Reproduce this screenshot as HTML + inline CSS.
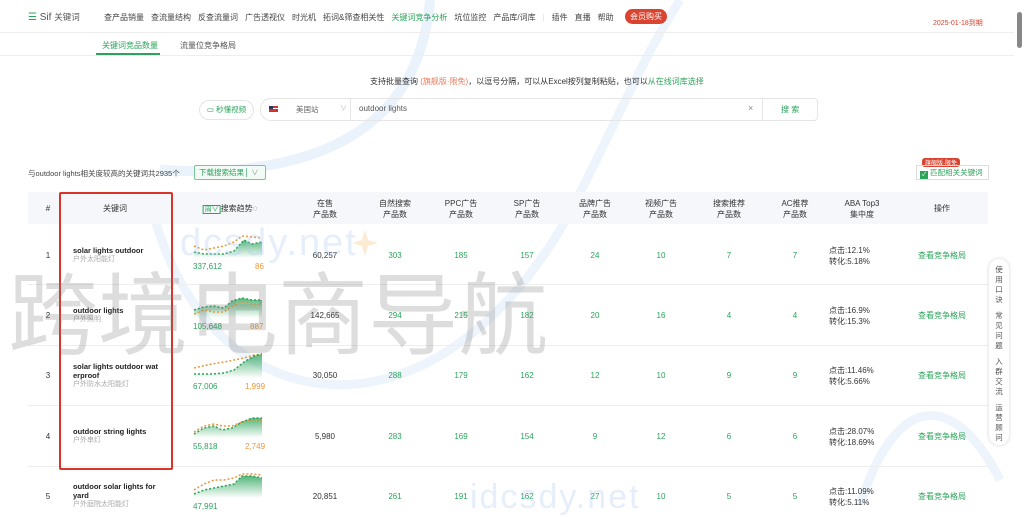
<!DOCTYPE html>
<html><head><meta charset="utf-8"><style>
*{box-sizing:border-box;margin:0;padding:0}
body{width:1024px;height:505px;overflow:hidden;background:#fff;font-family:"Liberation Sans","Noto Sans CJK SC",sans-serif;color:#333;position:relative;font-size:8px}
.abs{position:absolute;white-space:nowrap}
.top{position:absolute;left:0;top:0;width:1014px;height:33px;border-bottom:1px solid #eee}
.nav span{margin-right:7px}
.g{color:#2aa45a}
.o{color:#e8973a}
.th{position:absolute;top:192px;left:28px;width:960px;height:32px;background:#f5f7fa}
.c{position:absolute;text-align:center;transform:translateX(-50%);white-space:nowrap;line-height:11px}
.line{position:absolute;left:28px;width:960px;height:1px;background:#eee}
.kw{position:absolute;left:73px;font-weight:bold;color:#222;font-size:7.5px;line-height:9px;width:90px}
.kw i{display:block;font-style:normal;font-weight:normal;color:#aaa;font-size:7px}
.lk{color:#2aa45a}
.sb div{height:10.5px}
</style></head><body>
<svg class="abs" style="left:0;top:0" width="1024" height="505">
<path d="M430 0 C 420 120 330 180 160 170" fill="none" stroke="#eaf2fc" stroke-width="10"/>
<path d="M150 200 C 200 420 420 460 560 230 C 600 160 640 60 680 0" fill="none" stroke="#eef4fc" stroke-width="9"/>
<path d="M1000 480 C 960 400 900 380 860 505" fill="none" stroke="#eef4fc" stroke-width="9"/>
<path d="M365 230 l3 10 10 3 -10 3 -3 10 -3 -10 -10 -3 10 -3z" fill="#fcebd2"/>
</svg>
<div class="top">
<div class="abs" style="left:28px;top:11px;font-size:10px;color:#555"><span class="g">☰</span> Sif <span style="font-size:8.5px">关键词</span></div>
<div class="abs nav" style="left:104px;top:12px;font-size:8px;color:#444">
<span>查产品销量</span><span>查流量结构</span><span>反查流量词</span><span>广告透视仪</span><span>时光机</span><span>拓词&amp;筛查相关性</span><span class="g">关键词竞争分析</span><span>坑位监控</span><span>产品库/词库</span><span style="color:#ddd">|</span><span>插件</span><span>直播</span><span>帮助</span></div>
<div class="abs" style="left:625px;top:9px;background:#d9432f;color:#fff;border-radius:8px;padding:2px 5px;font-size:8px">会员购买</div>
<div class="abs" style="left:933px;top:18px;color:#d9432f;font-size:7px">2025-01-18到期</div>
</div>
<div class="abs" style="left:0;top:55px;width:1014px;height:1px;background:#eee"></div>
<div class="abs g" style="left:102px;top:40px;font-size:8px">关键词竞品数量</div>
<div class="abs" style="left:96px;top:53px;width:64px;height:2px;background:#2aa45a"></div>
<div class="abs" style="left:180px;top:40px;font-size:8px;color:#555">流量位竞争格局</div>
<div class="abs" style="left:370px;top:76px;font-size:8px;color:#333">支持批量查询 <span style="color:#e87a5a">(旗舰版·限免)</span>，以逗号分隔，可以从Excel按列复制粘贴，也可以<span class="g">从在线词库选择</span></div>
<div class="abs g" style="left:199px;top:100px;width:55px;height:20px;border:1px solid #e5e5e5;border-radius:10px;font-size:7.5px;line-height:18px;text-align:center">▭ 秒懂视频</div>
<div class="abs" style="left:260px;top:98px;width:558px;height:23px;border:1px solid #e5e5e5;border-radius:11px 4px 4px 11px"></div>
<div class="abs" style="left:269px;top:106px;width:9px;height:6px;background:linear-gradient(#c33 0 33%,#fff 33% 50%,#c33 50%);"><div style="width:4px;height:3px;background:#335"></div></div>
<div class="abs" style="left:296px;top:104px;color:#666;font-size:7.5px">美国站</div>
<div class="abs" style="left:340px;top:103px;color:#bbb;font-size:7px">∨</div>
<div class="abs" style="left:350px;top:98px;width:1px;height:23px;background:#e5e5e5"></div>
<div class="abs" style="left:359px;top:104px;color:#555;font-size:8px">outdoor lights</div>
<div class="abs" style="left:748px;top:103px;color:#888;font-size:9px">×</div>
<div class="abs" style="left:762px;top:98px;width:1px;height:23px;background:#e5e5e5"></div>
<div class="abs g" style="left:781px;top:104px;font-size:8px">搜 索</div>
<div class="abs" style="left:28px;top:168px;font-size:7.5px;color:#444">与outdoor lights相关度较高的关键词共2935个</div>
<div class="abs g" style="left:194px;top:165px;width:72px;height:15px;border:1px solid #7cc49a;border-radius:2px;font-size:7.5px;line-height:13px;padding-left:4px;background:#f3fbf6">下载搜索结果 <span style="border-left:1px solid #7cc49a;padding-left:4px;color:#999">∨</span></div>
<div class="abs" style="left:922px;top:158px;background:#d9432f;color:#fff;font-size:6px;padding:0 3px;border-radius:3px">旗舰版·限免</div>
<div class="abs g" style="left:916px;top:165px;width:73px;height:15px;border:1px solid #ddd;font-size:7.5px;line-height:13px;padding-left:3px"><span style="display:inline-block;width:8px;height:8px;background:#2aa45a;color:#fff;font-size:6px;line-height:8px;text-align:center;vertical-align:-1px">✓</span> 匹配相关关键词</div>
<div class="th"></div>
<div class="c" style="left:48px;top:203px">#</div>
<div class="c" style="left:115px;top:203px">关键词</div>
<div class="c" style="left:230px;top:203px"><span class="g" style="border:1px solid #2aa45a;padding:0 1px;font-size:7px">周∨</span>搜索趋势◌</div>
<div class="c" style="left:325px;top:198px">在售<br>产品数</div>
<div class="c" style="left:395px;top:198px">自然搜索<br>产品数</div>
<div class="c" style="left:461px;top:198px">PPC广告<br>产品数</div>
<div class="c" style="left:527px;top:198px">SP广告<br>产品数</div>
<div class="c" style="left:595px;top:198px">品牌广告<br>产品数</div>
<div class="c" style="left:661px;top:198px">视频广告<br>产品数</div>
<div class="c" style="left:729px;top:198px">搜索推荐<br>产品数</div>
<div class="c" style="left:795px;top:198px">AC推荐<br>产品数</div>
<div class="c" style="left:862px;top:198px">ABA Top3<br>集中度</div>
<div class="c" style="left:942px;top:203px">操作</div>
<div class="line" style="top:284px"></div><div class="line" style="top:345px"></div><div class="line" style="top:405px"></div><div class="line" style="top:466px"></div>

<div class="c" style="left:48px;top:250px">1</div><div class="kw" style="top:246px">solar lights outdoor<i>户外太阳能灯</i></div>
<div class="c" style="left:48px;top:310px">2</div><div class="kw" style="top:306px">outdoor lights<i>户外照明</i></div>
<div class="c" style="left:48px;top:370px">3</div><div class="kw" style="top:362px">solar lights outdoor wat erproof<i>户外防水太阳能灯</i></div>
<div class="c" style="left:48px;top:431px">4</div><div class="kw" style="top:427px">outdoor string lights<i>户外串灯</i></div>
<div class="c" style="left:48px;top:491px">5</div><div class="kw" style="top:482px">outdoor solar lights for yard<i>户外庭院太阳能灯</i></div>

<svg class="abs" style="left:192px;top:228px" width="74" height="280">
<defs><linearGradient id="gg" x1="0" y1="0" x2="0" y2="1"><stop offset="0" stop-color="#2aa45a" stop-opacity=".8"/><stop offset="1" stop-color="#2aa45a" stop-opacity="0"/></linearGradient></defs>
<g>
<path d="M2 24 L12 26 L22 26 L32 26 L42 23 L52 12 L60 16 L70 14 L70 30 L2 30Z" fill="url(#gg)"/>
<path d="M2 18 L12 22 L22 20 L32 18 L42 14 L50 8 L60 9 L70 10" fill="none" stroke="#e8973a" stroke-width="1.5" stroke-dasharray="2 2"/>
<path d="M2 24 L12 26 L22 26 L32 26 L42 23 L52 12 L60 16 L70 14" fill="none" stroke="#2aa45a" stroke-width="1.5" stroke-dasharray="2 2"/>
</g>
<g transform="translate(0,60)">
<path d="M2 22 L12 19 L22 18 L32 20 L40 13 L50 10 L60 12 L70 12 L70 30 L2 30Z" fill="url(#gg)"/>
<path d="M2 26 L12 22 L22 24 L32 24 L40 18 L50 14 L60 16 L70 16" fill="none" stroke="#e8973a" stroke-width="1.5" stroke-dasharray="2 2"/>
<path d="M2 22 L12 19 L22 18 L32 20 L40 13 L50 10 L60 12 L70 12" fill="none" stroke="#2aa45a" stroke-width="1.5" stroke-dasharray="2 2"/>
</g>
<g transform="translate(0,120)">
<path d="M2 26 L20 26 L32 25 L42 22 L52 14 L62 8 L70 6 L70 30 L2 30Z" fill="url(#gg)"/>
<path d="M2 20 L20 16 L32 14 L42 12 L52 10 L62 7 L70 6" fill="none" stroke="#e8973a" stroke-width="1.5" stroke-dasharray="2 2"/>
<path d="M2 26 L20 26 L32 25 L42 22 L52 14 L62 8 L70 6" fill="none" stroke="#2aa45a" stroke-width="1.5" stroke-dasharray="2 2"/>
</g>
<g transform="translate(0,180)">
<path d="M2 26 L12 20 L22 18 L30 22 L40 20 L50 14 L60 10 L70 10 L70 30 L2 30Z" fill="url(#gg)"/>
<path d="M2 24 L12 18 L22 16 L30 18 L40 18 L50 14 L60 12 L70 12" fill="none" stroke="#e8973a" stroke-width="1.5" stroke-dasharray="2 2"/>
<path d="M2 26 L12 20 L22 18 L30 22 L40 20 L50 14 L60 10 L70 10" fill="none" stroke="#2aa45a" stroke-width="1.5" stroke-dasharray="2 2"/>
</g>
<g transform="translate(0,240)">
<path d="M2 26 L12 22 L22 20 L32 18 L42 16 L50 8 L60 8 L70 10 L70 30 L2 30Z" fill="url(#gg)"/>
<path d="M2 22 L12 16 L22 12 L32 12 L42 10 L50 6 L60 6 L70 7" fill="none" stroke="#e8973a" stroke-width="1.5" stroke-dasharray="2 2"/>
<path d="M2 26 L12 22 L22 20 L32 18 L42 16 L50 8 L60 8 L70 10" fill="none" stroke="#2aa45a" stroke-width="1.5" stroke-dasharray="2 2"/>
</g>
</svg>
<div class="abs g" style="left:193px;top:262px">337,612</div><div class="abs o" style="left:255px;top:262px">86</div>
<div class="abs g" style="left:193px;top:322px">105,648</div><div class="abs o" style="left:250px;top:322px">887</div>
<div class="abs g" style="left:193px;top:382px">67,006</div><div class="abs o" style="left:245px;top:382px">1,999</div>
<div class="abs g" style="left:193px;top:442px">55,818</div><div class="abs o" style="left:245px;top:442px">2,749</div>
<div class="abs g" style="left:193px;top:502px">47,991</div>

<div class="c" style="left:325px;top:250px">60,257</div><div class="c g" style="left:395px;top:250px">303</div><div class="c g" style="left:461px;top:250px">185</div><div class="c g" style="left:527px;top:250px">157</div><div class="c g" style="left:595px;top:250px">24</div><div class="c g" style="left:661px;top:250px">10</div><div class="c g" style="left:729px;top:250px">7</div><div class="c g" style="left:795px;top:250px">7</div><div class="abs" style="left:829px;top:245px;line-height:11px">点击:12.1%<br>转化:5.18%</div><div class="c lk" style="left:942px;top:250px">查看竞争格局</div>
<div class="c" style="left:325px;top:310px">142,665</div><div class="c g" style="left:395px;top:310px">294</div><div class="c g" style="left:461px;top:310px">215</div><div class="c g" style="left:527px;top:310px">182</div><div class="c g" style="left:595px;top:310px">20</div><div class="c g" style="left:661px;top:310px">16</div><div class="c g" style="left:729px;top:310px">4</div><div class="c g" style="left:795px;top:310px">4</div><div class="abs" style="left:829px;top:305px;line-height:11px">点击:16.9%<br>转化:15.3%</div><div class="c lk" style="left:942px;top:310px">查看竞争格局</div>
<div class="c" style="left:325px;top:370px">30,050</div><div class="c g" style="left:395px;top:370px">288</div><div class="c g" style="left:461px;top:370px">179</div><div class="c g" style="left:527px;top:370px">162</div><div class="c g" style="left:595px;top:370px">12</div><div class="c g" style="left:661px;top:370px">10</div><div class="c g" style="left:729px;top:370px">9</div><div class="c g" style="left:795px;top:370px">9</div><div class="abs" style="left:829px;top:365px;line-height:11px">点击:11.46%<br>转化:5.66%</div><div class="c lk" style="left:942px;top:370px">查看竞争格局</div>
<div class="c" style="left:325px;top:431px">5,980</div><div class="c g" style="left:395px;top:431px">283</div><div class="c g" style="left:461px;top:431px">169</div><div class="c g" style="left:527px;top:431px">154</div><div class="c g" style="left:595px;top:431px">9</div><div class="c g" style="left:661px;top:431px">12</div><div class="c g" style="left:729px;top:431px">6</div><div class="c g" style="left:795px;top:431px">6</div><div class="abs" style="left:829px;top:426px;line-height:11px">点击:28.07%<br>转化:18.69%</div><div class="c lk" style="left:942px;top:431px">查看竞争格局</div>
<div class="c" style="left:325px;top:491px">20,851</div><div class="c g" style="left:395px;top:491px">261</div><div class="c g" style="left:461px;top:491px">191</div><div class="c g" style="left:527px;top:491px">162</div><div class="c g" style="left:595px;top:491px">27</div><div class="c g" style="left:661px;top:491px">10</div><div class="c g" style="left:729px;top:491px">5</div><div class="c g" style="left:795px;top:491px">5</div><div class="abs" style="left:829px;top:486px;line-height:11px">点击:11.09%<br>转化:5.11%</div><div class="c lk" style="left:942px;top:491px">查看竞争格局</div>

<div class="abs" style="left:59px;top:192px;width:114px;height:278px;border:2px solid #d9342a;border-radius:2px"></div>
<div class="abs" style="left:988px;top:258px;width:22px;height:188px;border:1px solid #eee;border-radius:11px;background:#fff;box-shadow:0 0 3px rgba(0,0,0,.1);font-size:7.5px;color:#555;text-align:center;line-height:10px;padding-top:6px">使<br>用<br>口<br>诀<div style="height:6px"></div>常<br>见<br>问<br>题<div style="height:6px"></div>入<br>群<br>交<br>流<div style="height:6px"></div>运<br>营<br>顾<br>问</div>
<div class="abs" style="left:1017px;top:12px;width:5px;height:36px;background:#888;border-radius:3px"></div>
<div class="abs" style="left:180px;top:222px;font-size:38px;color:rgba(170,200,240,.3);letter-spacing:2px">dcsdy.net</div>
<div class="abs" style="left:470px;top:478px;font-size:34px;color:rgba(170,200,240,.3);letter-spacing:2px">idcsdy.net</div>
<div class="abs" style="left:8px;top:258px;font-size:90px;line-height:100px;color:rgba(120,120,120,.25);font-family:'Noto Sans CJK SC',sans-serif">跨境电商导航</div>
</body></html>
